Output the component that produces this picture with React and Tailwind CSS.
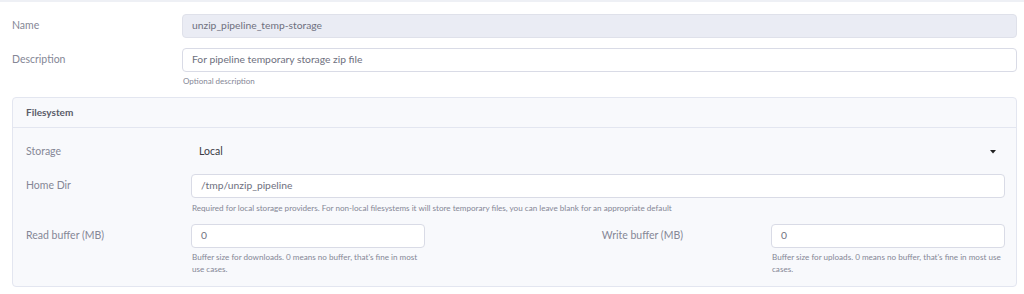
import React from "react";

const font = { fontFamily: "Lato, 'Open Sans', sans-serif" };

function Caret() {
  return (
    <svg width="6" height="4" viewBox="0 0 6 4" className="block">
      <path d="M0 0 L6 0 L3 3.5 Z" fill="#222" />
    </svg>
  );
}

export default function App() {
  return (
    <div className="w-[1024px] h-[294px] bg-white overflow-hidden" style={font}>
      <div className="h-[2px] bg-[#eef0f5]" />
      <div className="pl-[12px] pr-[7px] pt-[12px]">
        {/* Name */}
        <div className="flex items-center h-[24px]">
          <div className="w-[170px] text-[10.5px] text-[#858796]">Name</div>
          <div className="flex-1 h-[24px] rounded-[4px] border border-[#dfe1ea] bg-[#eaecf4] flex items-center pl-[9px] text-[10.3px] text-[#6e707e]">
            unzip_pipeline_temp-storage
          </div>
        </div>
        {/* Description */}
        <div className="flex items-start mt-[10px]">
          <div className="w-[170px] text-[10.5px] text-[#858796] h-[24px] flex items-center">Description</div>
          <div className="flex-1">
            <div className="h-[24px] rounded-[4px] border border-[#d9dbe6] bg-white flex items-center pl-[9px] text-[10.3px] text-[#6e707e]">
              For pipeline temporary storage zip file
            </div>
            <div className="text-[8px] text-[#858796] mt-[3px] pl-[1px]">Optional description</div>
          </div>
        </div>
        {/* Filesystem card */}
        <div className="mt-[10px] border border-[#e3e6f0] rounded-[4px] bg-[#f8f9fc] h-[190px]">
          <div className="h-[30px] border-b border-[#e3e6f0] flex items-center pl-[13px] text-[10px] font-bold text-[#5a5c69]">
            Filesystem
          </div>
          <div className="pl-[13px] pr-[11px] pt-[14px]">
            {/* Storage */}
            <div className="flex items-center h-[20px]">
              <div className="w-[165px] text-[10.5px] text-[#858796]">Storage</div>
              <div className="flex-1 flex items-center justify-between pl-[8px] pr-[9px]">
                <span className="text-[10.5px] text-[#3a3b45]">Local</span>
                <Caret />
              </div>
            </div>
            {/* Home Dir */}
            <div className="flex items-start mt-[12px]">
              <div className="w-[165px] h-[24px] flex items-center text-[10.5px] text-[#858796]">Home Dir</div>
              <div className="flex-1">
                <div className="h-[24px] rounded-[4px] border border-[#d9dbe6] bg-white flex items-center pl-[9px] text-[10.3px] text-[#6e707e]">
                  /tmp/unzip_pipeline
                </div>
                <div className="text-[8.1px] text-[#858796] mt-[4px] pl-[1px]">
                  Required for local storage providers. For non-local filesystems it will store temporary files, you can leave blank for an appropriate default
                </div>
              </div>
            </div>
            {/* Buffers */}
            <div className="flex items-start mt-[10px]">
              <div className="w-[165px] h-[24px] flex items-center text-[10.5px] text-[#858796]">Read buffer (MB)</div>
              <div className="w-[234px]">
                <div className="h-[24px] rounded-[4px] border border-[#d9dbe6] bg-white flex items-center pl-[9px] text-[10.3px] text-[#6e707e]">
                  0
                </div>
                <div className="text-[8.1px] leading-[12px] text-[#858796] mt-[3px] pl-[1px] pr-[4px]">
                  Buffer size for downloads. 0 means no buffer, that's fine in most use cases.
                </div>
              </div>
              <div className="w-[346px] h-[24px] flex items-center justify-end pr-[88px] text-[10.5px] text-[#858796]">Write buffer (MB)</div>
              <div className="flex-1">
                <div className="h-[24px] rounded-[4px] border border-[#d9dbe6] bg-white flex items-center pl-[9px] text-[10.3px] text-[#6e707e]">
                  0
                </div>
                <div className="text-[8.1px] leading-[12px] text-[#858796] mt-[3px] pl-[1px]">
                  Buffer size for uploads. 0 means no buffer, that's fine in most use cases.
                </div>
              </div>
            </div>
          </div>
        </div>
      </div>
    </div>
  );
}
